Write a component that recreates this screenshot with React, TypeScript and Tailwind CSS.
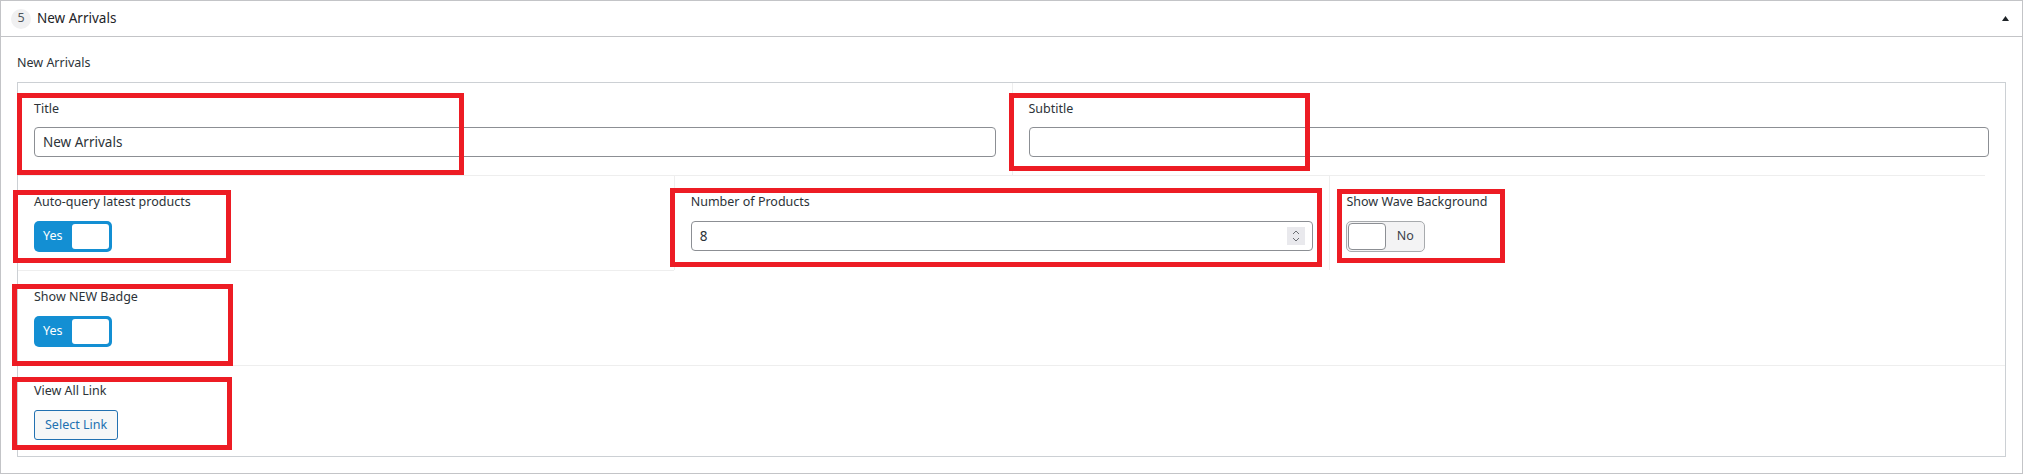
const redBoxes = [
  { left: 17, top: 93, width: 447, height: 82 },
  { left: 1009, top: 93, width: 301, height: 78 },
  { left: 13, top: 190, width: 218, height: 73 },
  { left: 670, top: 188, width: 652, height: 79 },
  { left: 1337, top: 189, width: 168, height: 74 },
  { left: 12, top: 284, width: 221, height: 82 },
  { left: 12, top: 377, width: 220, height: 73 },
];

const Label = ({ children }: { children: React.ReactNode }) => (
  <p className="text-[12.5px] leading-[18px] text-[#2c3338]">{children}</p>
);

const TextInput = ({ value }: { value?: string }) => (
  <div className="mt-[9px] flex h-[30px] w-full items-center rounded-[4px] border border-[#8c8f94] bg-white px-2 text-[13.5px] text-[#2c3338]">
    {value}
  </div>
);

const Toggle = ({ on }: { on: boolean }) =>
  on ? (
    <div className="mt-[10px] flex h-[31px] w-[78px] items-center justify-between rounded-[5px] bg-[#138fd3] pl-[9px] pr-[3px]">
      <span className="text-[12.5px] text-white">Yes</span>
      <span className="h-[25px] w-[37px] rounded-[3px] bg-white" />
    </div>
  ) : (
    <div className="mt-[10px] flex h-[31px] w-[79px] items-center rounded-[5px] border border-[#a7aaad] bg-[#f3f3f4] pl-[1px]">
      <span className="h-[27px] w-[38px] rounded-[4px] border border-[#8c8f94] bg-white" />
      <span className="flex-1 text-center text-[12.5px] text-[#3c434a]">No</span>
    </div>
  );

const NumberInput = ({ value }: { value: string }) => (
  <div className="mt-[10px] flex h-[30px] w-full items-center justify-between rounded-[4px] border border-[#8c8f94] bg-white pl-2 pr-[7px] text-[13.5px] text-[#2c3338]">
    <span>{value}</span>
    <span className="flex h-[18px] w-[18px] flex-col items-center justify-center bg-[#e9e9ed]">
      <svg width="8" height="14" viewBox="0 0 8 14" fill="none" stroke="#6b6e73" strokeWidth="1">
        <path d="M1 5 L4 2 L7 5" />
        <path d="M1 9 L4 12 L7 9" />
      </svg>
    </span>
  </div>
);

export default function App() {
  return (
    <div className="relative w-[2023px] font-['Noto_Sans',sans-serif]">
      <div className="border border-[#c3c4c7] bg-white">
        <div className="flex h-[36px] items-center justify-between border-b border-[#c3c4c7] pl-[10px] pr-[13px]">
          <div className="flex items-center gap-[6px]">
            <span className="flex h-[20px] w-[20px] items-center justify-center rounded-full bg-[#f0f0f1] text-[12.5px] text-[#50575e]">
              5
            </span>
            <span className="text-[13.5px] text-[#1d2327]">New Arrivals</span>
          </div>
          <svg width="7" height="5" viewBox="0 0 7 5">
            <path d="M0 5 L3.5 0 L7 5 Z" fill="#1d2327" />
          </svg>
        </div>

        <div className="px-4 pb-4 pt-[17px]">
          <Label>New Arrivals</Label>
          <div className="mt-[10px] border border-[#ccd0d4]">
            <div className="flex">
              <div className="w-1/2 px-4 pb-[18px] pt-[17px]">
                <Label>Title</Label>
                <TextInput value="New Arrivals" />
              </div>
              <div className="w-1/2 border-l border-[#eeeeee] px-4 pb-[18px] pt-[17px]">
                <Label>Subtitle</Label>
                <TextInput />
              </div>
            </div>

            <div className="flex">
              <div className="w-[33%] border-t border-[#eeeeee] px-4 pb-[18px] pt-[17px]">
                <Label>Auto-query latest products</Label>
                <Toggle on />
              </div>
              <div className="w-[33%] border-l border-t border-[#eeeeee] px-4 pb-[18px] pt-[17px]">
                <Label>Number of Products</Label>
                <NumberInput value="8" />
              </div>
              <div className="w-[33%] border-l border-t border-[#eeeeee] px-4 pb-[18px] pt-[17px]">
                <Label>Show Wave Background</Label>
                <Toggle on={false} />
              </div>
            </div>

            <div className="flex">
              <div className="w-[33%] border-t border-[#eeeeee] px-4 pb-[18px] pt-[17px]">
                <Label>Show NEW Badge</Label>
                <Toggle on />
              </div>
            </div>

            <div className="border-t border-[#eeeeee] px-4 pb-4 pt-4">
              <Label>View All Link</Label>
              <button className="mt-[10px] h-[30px] rounded-[3px] border border-[#2271b1] bg-[#f6f7f7] px-[10px] text-[12.5px] text-[#2271b1]">
                Select Link
              </button>
            </div>
          </div>
        </div>
      </div>

      {redBoxes.map((b, i) => (
        <div
          key={i}
          className="pointer-events-none absolute border-[5px] border-[#ed1c24]"
          style={{ left: b.left, top: b.top, width: b.width, height: b.height }}
        />
      ))}
    </div>
  );
}
